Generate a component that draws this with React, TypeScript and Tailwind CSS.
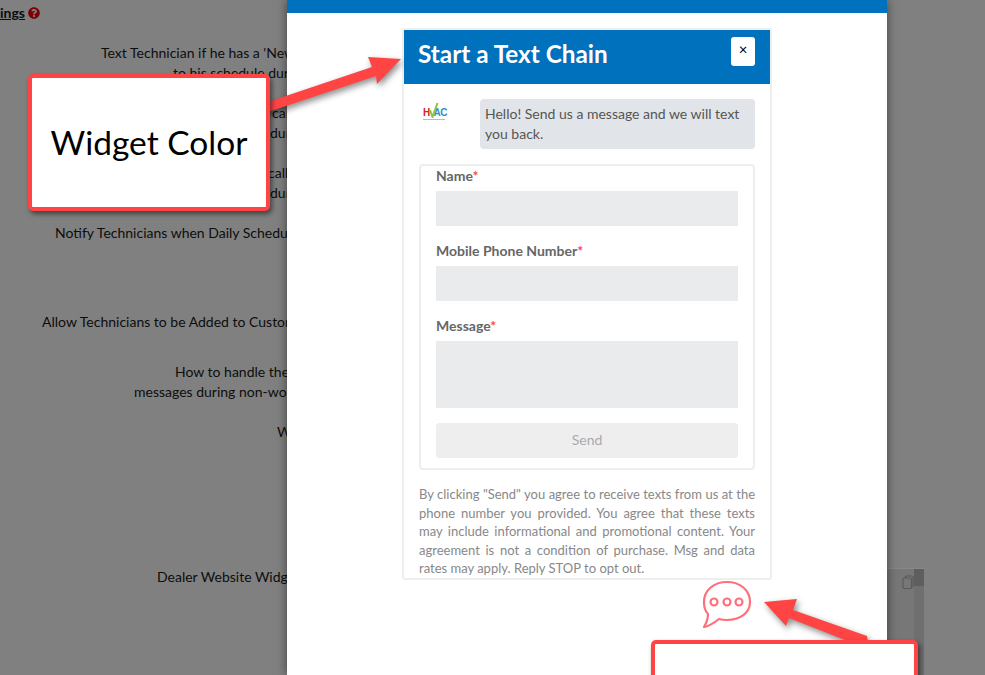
import * as React from "react"
import { FaQuestionCircle } from "react-icons/fa"

const FormLabel = ({ children }: { children: React.ReactNode }) => (
    <label className="block h-[18px] text-[14px] font-bold leading-[18px] text-[#666]">
        {children}
        <span className="text-[#f44]">*</span>
    </label>
)

// faded background settings page, cut off by the modal
const BackgroundSettings = () => (
    <div className="w-[287px] shrink-0 overflow-hidden whitespace-nowrap text-[14px] leading-5 text-[#0d0d0d] pt-[3px]">
        <div className="flex items-center gap-[3px]">
            <span className="font-bold underline">ings </span>
            <FaQuestionCircle className="text-[12px] text-[#7f0000]" />
        </div>
        <div className="mt-5 pl-[101px]">Text Technician if he has a 'New Job' added</div>
        <div className="pl-[173px]">to his schedule during the day</div>
        <div className="mt-5 pl-[272px]">cancelled</div>
        <div className="pl-[270px]">during</div>
        <div className="mt-5 pl-[268px]">called</div>
        <div className="pl-[270px]">during</div>
        <div className="mt-5 pl-[55px]">Notify Technicians when Daily Schedule is ready</div>
        <div className="mt-[69px] pl-[42px]">Allow Technicians to be Added to Customer chats</div>
        <div className="mt-[30px] pl-[175px]">How to handle the incoming</div>
        <div className="pl-[134px]">messages during non-working hours</div>
        <div className="mt-5 pl-[277px]">Website</div>
        <div className="mt-[125px] pl-[157px]">Dealer Website Widget Code</div>
    </div>
)

const HvacLogo = () => (
    <div className="relative h-5 w-[24px] font-['Liberation_Sans',sans-serif] text-[10px] font-bold leading-none">
        <div className="flex pt-[6px] tracking-[-0.5px]">
            <span className="text-[#d8232a]">H</span>
            <span className="w-[6px]" />
            <span className="text-[#2a8fc9]">AC</span>
        </div>
        <svg className="absolute left-[6px] top-0" width="10" height="16" viewBox="0 0 10 16">
            <path d="M1 8 L3.5 15 L8.5 1" fill="none" stroke="#8cc63f" strokeWidth="2" />
        </svg>
        <div className="mt-[1px] h-[1px] w-[22px] bg-[#bbb]" />
    </div>
)

const TextChainWidget = () => (
    <div className="w-[370px] rounded-[3px] border-2 border-[#eee] bg-white">
        <div className="flex h-[54px] items-start justify-between bg-[#0071bc] pl-[14px] pr-[15px]">
            <h1 className="pt-[8px] text-[24.3px] font-bold leading-[32px] text-white">Start a Text Chain</h1>
            <button className="mt-[7px] flex h-[29px] w-[24px] items-center justify-center rounded-[3px] bg-white pb-[5px] text-[15px] leading-none text-black">
                ×
            </button>
        </div>

        <div className="px-[15px] pt-[15px]">
            <div className="flex">
                <div className="w-[61px] pl-[4px] pt-[3px]">
                    <HvacLogo />
                </div>
                <div className="flex-1 rounded-[4px] bg-[#e1e5e9] px-[5px] py-[5px] text-[14px] leading-5 text-[#555]">
                    Hello! Send us a message and we will text you back.
                </div>
            </div>

            <form className="mt-[15px] h-[306px] rounded-[4px] border-2 border-[#eee] px-[15px] pt-[1px]">
                <FormLabel>Name</FormLabel>
                <div className="mt-[6px] h-[35px] bg-[#e9ebed]" />
                <div className="mt-[16px]">
                    <FormLabel>Mobile Phone Number</FormLabel>
                </div>
                <div className="mt-[6px] h-[35px] bg-[#e9ebed]" />
                <div className="mt-[16px]">
                    <FormLabel>Message</FormLabel>
                </div>
                <div className="mt-[6px] h-[67px] bg-[#e9ebed]" />
                <div className="mt-[15px] flex h-[35px] items-center justify-center rounded-[3px] bg-[#eee] pb-[2px] text-[14px] text-[#aaa]">
                    Send
                </div>
            </form>

            <p className="mt-[15px] text-justify text-[13px] leading-[18.5px] text-[#888]">
                By clicking "Send" you agree to receive texts from us at the phone number you provided. You
                agree that these texts may include informational and promotional content. Your agreement is
                not a condition of purchase. Msg and data rates may apply. Reply STOP to opt out.
            </p>
        </div>
    </div>
)

const ChatIcon = () => (
    <svg width="50" height="48" viewBox="0 0 50 48" fill="none" stroke="#ff6f7c" strokeWidth="2.2">
        <path d="M2 22 C2 10 12 2 25 2 C38 2 48 10 48 22 C48 33 38 40 25 40 C22 40 20 40 17 39 C12 43 8 46 2 47 C5 42 6 38 6 34 C3 31 2 27 2 22 Z" strokeLinejoin="round" />
        <circle cx="12" cy="22" r="3.5" />
        <circle cx="25" cy="22" r="3.5" />
        <circle cx="37" cy="22" r="3.5" />
    </svg>
)

export default function App() {
    return (
        <div className="relative flex h-[675px] w-[985px] overflow-hidden bg-[#808080] font-['Lato',sans-serif]">
            <BackgroundSettings />

            <div className="relative z-10 flex w-[600px] shrink-0 flex-col bg-white shadow-[0_0_10px_rgba(0,0,0,0.5)]">
                <div className="h-[13px] bg-[#0071bc]" />
                <div className="flex flex-col pl-[115px] pt-[15px]">
                    <TextChainWidget />
                    <div className="pl-[300px]">
                        <ChatIcon />
                    </div>
                </div>
            </div>

            {/* code box behind the modal, right side */}
            <div className="flex-1 pt-[568px]">
                <div className="flex h-[107px] w-[37px] border-t border-[#888] bg-[#777]">
                    <div className="flex flex-1 justify-end pt-[6px]">
                        <svg width="12" height="14" viewBox="0 0 12 14" fill="none" stroke="#5a5a5a" strokeWidth="1.2">
                            <rect x="1" y="3" width="8.5" height="10.5" rx="1.5" />
                            <path d="M3.5 3 V2 Q3.5 1 4.5 1 H9.5 Q11 1 11 2.5 V11 Q11 12 9.5 12" />
                        </svg>
                    </div>
                    <div className="w-[10px] bg-[#6f6f6f]">
                        <div className="h-[17px] bg-[#5e5e5e]" />
                    </div>
                </div>
            </div>

            {/* annotations pasted over the screenshot */}
            <svg className="absolute inset-0 z-20" width="985" height="675" viewBox="0 0 985 675">
                <g fill="#ff4444" style={{ filter: "drop-shadow(2px 3px 3px rgba(0,0,0,0.45))" }}>
                    <polygon points="262,104 372,67 368,57 401,59 377,84 376,76 262,114" />
                    <polygon points="867,636 793,610 797,599 764,602 786,626 789,618 850,642 868,642" />
                </g>
            </svg>
            <div className="absolute left-[28px] top-[74px] z-30 flex h-[137px] w-[242px] items-center justify-center rounded-[5px] border-4 border-[#ff4444] bg-white text-[33.5px] text-black shadow-[2px_3px_5px_rgba(0,0,0,0.5)]">
                Widget Color
            </div>
            <div className="absolute left-[651px] top-[640px] z-30 h-[60px] w-[267px] rounded-[5px] border-4 border-[#ff4444] bg-white shadow-[2px_3px_5px_rgba(0,0,0,0.5)]" />
        </div>
    )
}
